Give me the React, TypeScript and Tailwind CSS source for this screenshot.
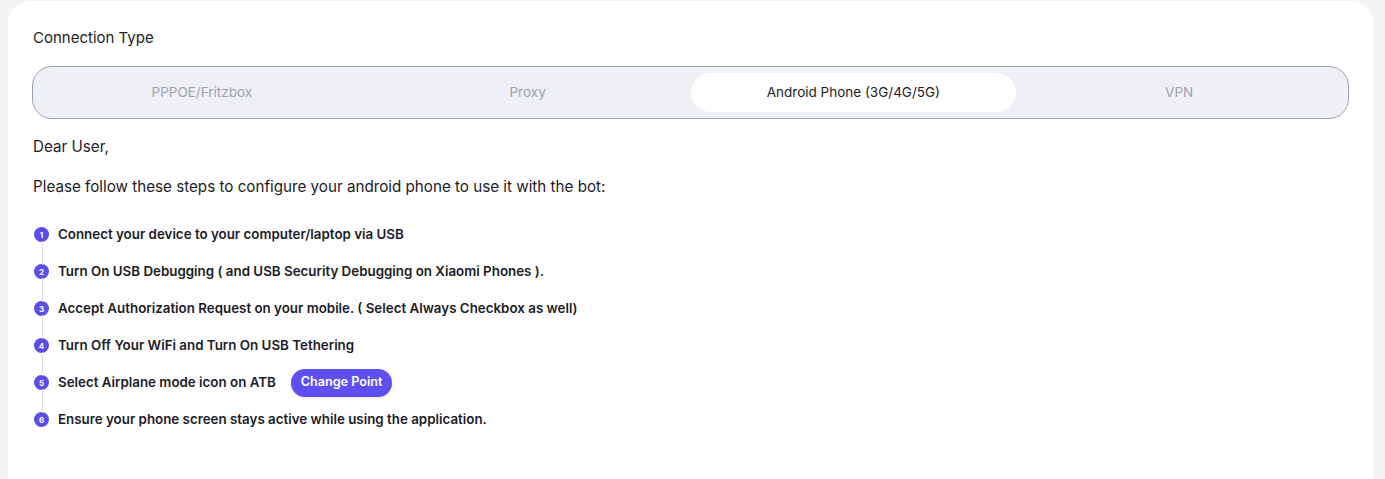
import React from "react";

const tabs = ["PPPOE/Fritzbox", "Proxy", "Android Phone (3G/4G/5G)", "VPN"];

const steps = [
  "Connect your device to your computer/laptop via USB",
  "Turn On USB Debugging ( and USB Security Debugging on Xiaomi Phones ).",
  "Accept Authorization Request on your mobile. ( Select Always Checkbox as well)",
  "Turn Off Your WiFi and Turn On USB Tethering",
  "Select Airplane mode icon on ATB",
  "Ensure your phone screen stays active while using the application.",
];

export default function App() {
  return (
    <div className="min-h-[479px] w-full bg-[#f4f4f5] pl-2 pr-3 pt-px font-['Inter',sans-serif] text-[#1c1c28]">
      <div className="min-h-[520px] rounded-t-[22px] bg-white px-[25px] pt-[27px]">
        <div className="text-[15px] leading-5">Connection Type</div>
        <div className="mt-[18px] -mx-px grid grid-cols-4 rounded-[20px] border border-[#9aa3b2] bg-[#eff0f5] p-[6px]">
          {tabs.map((t, i) => (
            <div
              key={t}
              className={
                i === 2
                  ? "flex h-[39px] items-center justify-center rounded-[20px] bg-white text-[13.5px] text-[#1c1c28]"
                  : "flex h-[39px] items-center justify-center text-[13.5px] text-[#9ca3af]"
              }
            >
              {t}
            </div>
          ))}
        </div>
        <div className="mt-[18px] text-[15.2px] leading-5">Dear User,</div>
        <div className="mt-5 text-[15.2px] leading-5">
          Please follow these steps to configure your android phone to use it with the bot:
        </div>
        <div className="mt-[19px] flex flex-col">
          {steps.map((s, i) => (
            <div key={i} className="flex h-[37px] items-center gap-2">
              <div className="relative flex h-full w-[17px] items-center justify-center">
                {i > 0 && (
                  <div className="absolute left-1/2 top-0 h-[12px] w-px bg-[#dcdcdc]" />
                )}
                {i < steps.length - 1 && (
                  <div className="absolute bottom-0 left-1/2 h-[12px] w-px bg-[#dcdcdc]" />
                )}
                <div className="flex h-[15px] w-[15px] items-center justify-center rounded-full bg-[#5b4de8] text-[8px] font-bold text-white">
                  {i + 1}
                </div>
              </div>
              <div className="text-[13.35px] font-semibold text-[#1c1c28]">{s}</div>
              {i === 4 && (
                <button className="ml-[7px] h-[28px] rounded-full bg-[#604ff0] px-[10px] text-[12.6px] font-semibold text-white shadow-sm">
                  Change Point
                </button>
              )}
            </div>
          ))}
        </div>
      </div>
    </div>
  );
}
